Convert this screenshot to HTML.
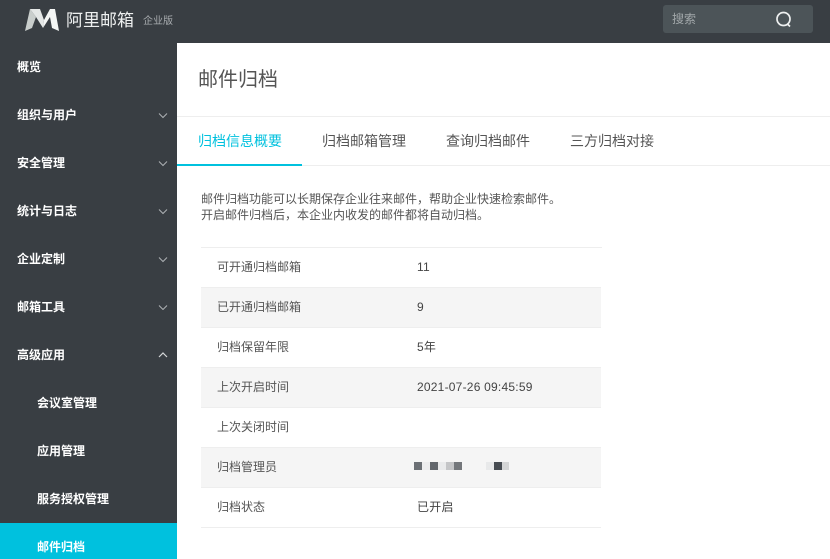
<!DOCTYPE html>
<html lang="zh"><head><meta charset="utf-8">
<style>
html,body{margin:0;padding:0;width:830px;height:559px;overflow:hidden;background:#fff;font-family:"Liberation Sans","WenQuanYi Zen Hei","Noto Sans CJK SC",sans-serif;}
div{position:absolute;white-space:nowrap;}
.top{left:0;top:0;width:830px;height:43px;background:#393e43;}
.side{left:0;top:43px;width:177px;height:516px;background:#393e43;}
.m{left:17px;font-size:12px;line-height:16px;color:#fff;font-weight:bold;}
.s{left:37px;font-size:12px;line-height:16px;color:#fff;font-weight:bold;}
.tab{top:133px;font-size:14px;line-height:16px;color:#555;}
.row{left:201px;width:400px;height:39px;border-bottom:1px solid #eee;}
.l{left:217px;font-size:12px;line-height:16px;color:#555;}
.v{left:417px;font-size:12px;line-height:16px;color:#444;letter-spacing:.22px;}
svg{position:absolute;}
.b{height:8px;top:462px;}
</style></head><body>
<div class="top"></div>
<svg style="left:24px;top:8px" width="37" height="24" viewBox="0 0 37 24"><path d="M1 23 L6 1 L12 9 L8 20Z" fill="#c9cecc"/><path d="M6 1 L16 1 L20 12 L19 20 L12 9Z" fill="#e4e7e6"/><path d="M19 20 L20 12 L26 1 L31 1 L35 23 L28 20 L26 9Z" fill="#f4f6f5"/></svg>
<div style="left:66px;top:10px;font-size:17px;line-height:22px;color:#eef0f0">阿里邮箱</div>
<div style="left:143px;top:15px;font-size:10px;line-height:13px;color:#a9adb0">企业版</div>
<div style="left:663px;top:5px;width:150px;height:28px;background:#4c5458;border-radius:3px"></div>
<div style="left:672px;top:11px;font-size:12px;line-height:16px;color:#a2a8aa">搜索</div>
<svg style="left:774px;top:10px" width="20" height="20" viewBox="0 0 20 20"><circle cx="9.5" cy="9" r="6.5" fill="none" stroke="#eef0f0" stroke-width="1.7"/><path d="M13.5 14 L16 16.5" stroke="#eef0f0" stroke-width="1.7" fill="none"/></svg>

<div class="side"></div>
<div class="m" style="top:59px">概览</div>
<div class="m" style="top:107px">组织与用户</div>
<div class="m" style="top:155px">安全管理</div>
<div class="m" style="top:203px">统计与日志</div>
<div class="m" style="top:251px">企业定制</div>
<div class="m" style="top:299px">邮箱工具</div>
<div class="m" style="top:347px">高级应用</div>
<div class="s" style="top:395px">会议室管理</div>
<div class="s" style="top:443px">应用管理</div>
<div class="s" style="top:491px">服务授权管理</div>
<div style="left:0;top:523px;width:177px;height:36px;background:#00c1de"></div>
<div class="s" style="top:539px">邮件归档</div>
<svg style="left:157px;top:110px" width="12" height="200" viewBox="0 0 12 200" fill="none" stroke="#aeb2b5" stroke-width="1"><path d="M2 3.5 L6 7.5 L10 3.5M2 51.5 L6 55.5 L10 51.5M2 99.5 L6 103.5 L10 99.5M2 147.5 L6 151.5 L10 147.5M2 195.5 L6 199.5 L10 195.5"/></svg>
<svg style="left:157px;top:350px" width="12" height="10" viewBox="0 0 12 10" fill="none" stroke="#d5d7d9" stroke-width="1.2"><path d="M2 7 L6 3 L10 7"/></svg>

<div style="left:198px;top:67px;font-size:20px;line-height:26px;color:#555">邮件归档</div>
<div style="left:177px;top:116px;width:653px;height:1px;background:#eee"></div>
<div style="left:177px;top:165px;width:653px;height:1px;background:#eee"></div>
<div style="left:177px;top:164px;width:125px;height:2px;background:#00c1de"></div>
<div class="tab" style="left:198px;color:#00c1de">归档信息概要</div>
<div class="tab" style="left:322px">归档邮箱管理</div>
<div class="tab" style="left:446px">查询归档邮件</div>
<div class="tab" style="left:570px">三方归档对接</div>

<div style="left:201px;top:191px;font-size:12px;line-height:16px;color:#555">邮件归档功能可以长期保存企业往来邮件，帮助企业快速检索邮件。<br>开启邮件归档后，本企业内收发的邮件都将自动归档。</div>

<div style="left:201px;top:247px;width:401px;height:1px;background:#eee"></div>
<div class="row" style="top:248px"></div>
<div class="row" style="top:288px;background:#f5f5f5"></div>
<div class="row" style="top:328px"></div>
<div class="row" style="top:368px;background:#f5f5f5"></div>
<div class="row" style="top:408px"></div>
<div class="row" style="top:448px;background:#f5f5f5"></div>
<div class="row" style="top:488px"></div>

<div class="l" style="top:259px">可开通归档邮箱</div><div class="v" style="top:259px">11</div>
<div class="l" style="top:299px">已开通归档邮箱</div><div class="v" style="top:299px">9</div>
<div class="l" style="top:339px">归档保留年限</div><div class="v" style="top:339px">5年</div>
<div class="l" style="top:379px">上次开启时间</div><div class="v" style="top:379px">2021-07-26 09:45:59</div>
<div class="l" style="top:419px">上次关闭时间</div>
<div class="l" style="top:459px">归档管理员</div>
<div class="l" style="top:499px">归档状态</div><div class="v" style="top:499px">已开启</div>

<div class="b" style="left:414px;width:8px;background:#6c7075"></div>
<div class="b" style="left:422px;width:8px;background:#ededee"></div>
<div class="b" style="left:430px;width:8px;background:#63676c"></div>
<div class="b" style="left:438px;width:8px;background:#e9eaeb"></div>
<div class="b" style="left:446px;width:8px;background:#c4c5c7"></div>
<div class="b" style="left:454px;width:8px;background:#74777b"></div>
<div class="b" style="left:486px;width:8px;background:#e8e9ea"></div>
<div class="b" style="left:494px;width:8px;background:#474c52"></div>
<div class="b" style="left:502px;width:7px;background:#d4d5d6"></div>
</body></html>
